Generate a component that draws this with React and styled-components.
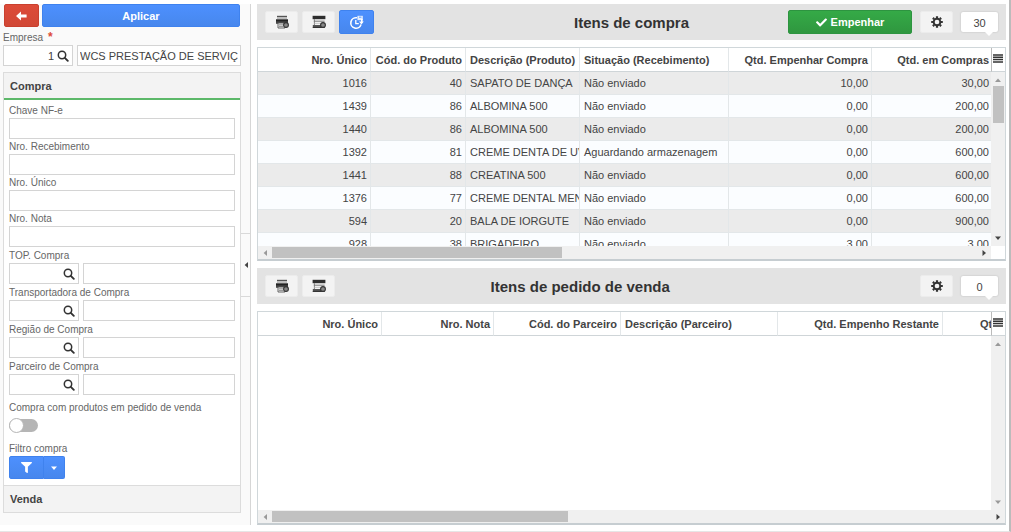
import { useState } from "react";
import styled, { createGlobalStyle, css } from "styled-components";
import { FaCheck, FaFilter } from "react-icons/fa";

const purchaseColumns = [
  { name: "Nro. Único", width: 113, align: "right" },
  { name: "Cód. do Produto", width: 95, align: "right" },
  { name: "Descrição (Produto)", width: 114, align: "left" },
  { name: "Situação (Recebimento)", width: 149, align: "left" },
  { name: "Qtd. Empenhar Compra", width: 143, align: "right" },
  { name: "Qtd. em Compras", width: 119, align: "right" },
];

const purchaseRows = [
  ["1016", "40", "SAPATO DE DANÇA", "Não enviado", "10,00", "30,00"],
  ["1439", "86", "ALBOMINA 500", "Não enviado", "0,00", "200,00"],
  ["1440", "86", "ALBOMINA 500", "Não enviado", "0,00", "200,00"],
  ["1392", "81", "CREME DENTA DE UV", "Aguardando armazenagem", "0,00", "600,00"],
  ["1441", "88", "CREATINA 500", "Não enviado", "0,00", "600,00"],
  ["1376", "77", "CREME DENTAL MEN", "Não enviado", "0,00", "600,00"],
  ["594", "20", "BALA DE IORGUTE", "Não enviado", "0,00", "900,00"],
  ["928", "38", "BRIGADEIRO", "Não enviado", "3,00", "3,00"],
];

const saleColumns = [
  { name: "Nro. Único", width: 124, align: "right" },
  { name: "Nro. Nota", width: 112, align: "right" },
  { name: "Cód. do Parceiro", width: 127, align: "right" },
  { name: "Descrição (Parceiro)", width: 157, align: "left" },
  { name: "Qtd. Empenho Restante", width: 165, align: "right" },
  { name: "Qtd.", width: 61, align: "right" },
];

const textFields = ["Chave NF-e", "Nro. Recebimento", "Nro. Único", "Nro. Nota"];

const lookupFields = [
  "TOP. Compra",
  "Transportadora de Compra",
  "Região de Compra",
  "Parceiro de Compra",
];

const ArrowLeftIcon = () => (
  <svg width="11" height="10" viewBox="0 0 11 10" aria-hidden="true">
    <path d="M0 5 5 0.4V3.4H10.6V6.6H5V9.6Z" fill="#fff" />
  </svg>
);

const SearchIcon = () => (
  <svg width="12" height="12" viewBox="0 0 12 12" fill="none" aria-hidden="true">
    <circle cx="5" cy="5" r="3.7" stroke="#333" strokeWidth="1.5" />
    <path d="m7.8 7.8 3 3" stroke="#333" strokeWidth="1.9" strokeLinecap="round" />
  </svg>
);

const PrinterIcon = () => (
  <svg width="14" height="14" viewBox="0 0 14 14" aria-hidden="true">
    <path d="M2 1h10v3H2z" fill="#bdbdbd" />
    <path d="M2 0.8h10v1.2H2z" fill="#555" />
    <path d="M1 4.2h12v4.6H1z" fill="#444" />
    <path d="M1 5.6h12" stroke="#222" strokeWidth="1.4" />
    <path d="M3 8h7v5H3z" fill="#eee" stroke="#555" strokeWidth="0.9" />
    <path d="M4 9.8h4M4 11.4h4" stroke="#777" strokeWidth="0.8" />
    <circle cx="11" cy="10" r="2.4" fill="#888" stroke="#333" strokeWidth="1.1" />
  </svg>
);

const GridCheckIcon = () => (
  <svg width="14" height="14" viewBox="0 0 14 14" aria-hidden="true">
    <path d="M0.6 0.8h12.8v3.4H0.6z" fill="#2e2e2e" />
    <path d="M1.8 6.2h10.8" stroke="#777" strokeWidth="1" />
    <path d="M2.4 4.2v6" stroke="#777" strokeWidth="0.9" />
    <path d="M2.6 8.4h6" stroke="#c4c4c4" strokeWidth="0.9" />
    <path d="M0.8 10h8.2v3H0.8z" fill="#555" />
    <path d="M0.8 12.4h12" stroke="#333" strokeWidth="1.1" />
    <circle cx="11" cy="10" r="2.4" fill="#888" stroke="#333" strokeWidth="1.1" />
  </svg>
);

const ClockRefreshIcon = () => (
  <svg width="15" height="15" viewBox="0 0 15 15" fill="none" aria-hidden="true">
    <path d="M12 9.4a5.2 5.2 0 1 1-4-6.6" stroke="#fff" strokeWidth="1.6" />
    <path d="M6.8 5v3.6h3" stroke="#fff" strokeWidth="1.3" />
    <path d="M8.4 0.8h5.4v4.4H8.4z" fill="#fff" fillOpacity="0.85" />
    <path d="M10 2.2h2.4" stroke="#4d90fe" strokeWidth="0.9" />
    <path d="M12.8 4v3" stroke="#fff" strokeWidth="1.6" />
    <path d="M10 6.4h4.8l-2.4 3Z" fill="#fff" />
  </svg>
);

const GearIcon = () => (
  <svg width="12" height="12" viewBox="0 0 12 12" fill="none" aria-hidden="true">
    <circle cx="6" cy="6" r="3.3" stroke="#333" strokeWidth="1.9" />
    <path
      d="M6 0.2v2M6 9.8v2M0.2 6h2M9.8 6h2M1.9 1.9l1.3 1.3M8.8 8.8l1.3 1.3M1.9 10.1l1.3-1.3M8.8 3.2l1.3-1.3"
      stroke="#333"
      strokeWidth="2.2"
    />
  </svg>
);

const MenuIcon = () => (
  <svg width="10" height="9" viewBox="0 0 10 9" aria-hidden="true">
    <path d="M0 1h10M0 3.3h10M0 5.6h10M0 7.9h10" stroke="#333" strokeWidth="1.5" />
  </svg>
);

const arrows = {
  up: "M0 5 3 1.6 6 5Z",
  down: "M0 1.5 3 5 6 1.5Z",
  left: "M5 0 1.6 3 5 6Z",
  right: "M1.5 0 5 3 1.5 6Z",
};

const Arrow = ({ direction, color = "#444" }) => (
  <svg width="6" height="6" viewBox="0 0 6 6" aria-hidden="true">
    <path d={arrows[direction]} fill={color} />
  </svg>
);

const LookupField = ({ id, label, value, required, light }) => (
  <Field $lookup={!light}>
    <Label htmlFor={id}>
      {label}
      {required && <Required>*</Required>}
    </Label>
    <LookupRow>
      <LookupBox>
        <LookupInput id={id} defaultValue={value?.code} />
        <SearchButton type="button" aria-label={`Pesquisar ${label}`}>
          <SearchIcon />
        </SearchButton>
      </LookupBox>
      <TextInput aria-label={`Descrição ${label}`} defaultValue={value?.name} />
    </LookupRow>
  </Field>
);

const Sidebar = () => {
  const [onlyOrders, setOnlyOrders] = useState(false);

  return (
    <SidebarContainer>
      <SidebarContent>
        <Actions>
          <BackButton type="button" aria-label="Voltar">
            <ArrowLeftIcon />
          </BackButton>
          <ApplyButton type="button">Aplicar</ApplyButton>
        </Actions>
        <Company>
          <LookupField
            id="empresa"
            label="Empresa"
            value={{ code: "1", name: "WCS PRESTAÇÃO DE SERVIÇOS" }}
            required
            light
          />
        </Company>
        <Accordion>
          <AccordionHeader type="button" aria-expanded="true" $open>
            Compra
          </AccordionHeader>
          <AccordionBody>
            {textFields.map((label, index) => (
              <Field key={label}>
                <Label htmlFor={`texto-${index}`}>{label}</Label>
                <TextInput id={`texto-${index}`} />
              </Field>
            ))}
            {lookupFields.map((label, index) => (
              <LookupField key={label} id={`busca-${index}`} label={label} />
            ))}
            <SwitchField>
              <Label htmlFor="produtos">Compra com produtos em pedido de venda</Label>
              <Switch
                id="produtos"
                type="checkbox"
                checked={onlyOrders}
                onChange={(e) => setOnlyOrders(e.target.checked)}
              />
            </SwitchField>
            <Label as="span">Filtro compra</Label>
            <FilterGroup>
              <FilterButton type="button" aria-label="Filtro compra">
                <FaFilter size={11} />
              </FilterButton>
              <FilterToggle type="button" aria-label="Opções do filtro">
                <Arrow direction="down" color="#fff" />
              </FilterToggle>
            </FilterGroup>
          </AccordionBody>
          <AccordionHeader type="button" aria-expanded="false">
            Venda
          </AccordionHeader>
        </Accordion>
      </SidebarContent>
      <Splitter>
        <CollapseButton type="button" aria-label="Recolher">
          <Arrow direction="left" />
        </CollapseButton>
      </Splitter>
    </SidebarContainer>
  );
};

const DataGrid = ({ columns, rows, label, thumb, fullBar }) => (
  <GridBox>
    <Viewport>
      <Table aria-label={label} $width={fullBar ? "746px" : "100%"}>
        <colgroup>
          {columns.map((column) => (
            <Col key={column.name} $width={column.width} />
          ))}
        </colgroup>
        <thead>
          <tr>
            {columns.map((column) => (
              <Th key={column.name} $align={column.align}>
                {column.name}
              </Th>
            ))}
          </tr>
        </thead>
        <tbody>
          {rows.map((row) => (
            <Tr key={row[0]}>
              {row.map((value, index) => (
                <Td key={columns[index].name} $align={columns[index].align}>
                  {value}
                </Td>
              ))}
            </Tr>
          ))}
        </tbody>
      </Table>
    </Viewport>
    <GridSide>
      <ColumnsButton type="button" aria-label="Colunas">
        <MenuIcon />
      </ColumnsButton>
      <VerticalBar>
        <Arrow direction="up" color="#999" />
        {!fullBar && <VerticalThumb />}
        <BarEnd $vertical>
          <Arrow direction="down" color={fullBar ? "#999" : "#444"} />
        </BarEnd>
      </VerticalBar>
    </GridSide>
    <HorizontalBar $full={fullBar}>
      <Arrow direction="left" color="#999" />
      <HorizontalThumb $width={thumb} />
      <BarEnd>
        <Arrow direction="right" />
      </BarEnd>
    </HorizontalBar>
  </GridBox>
);

const App = () => {
  return (
    <>
      <GlobalStyle />
      <Page>
        <Sidebar />
        <Main>
          <Toolbar $columns="1fr auto 1fr">
            <ToolGroup>
              <ToolButton type="button" aria-label="Imprimir">
                <PrinterIcon />
              </ToolButton>
              <ToolButton type="button" aria-label="Configurar grade">
                <GridCheckIcon />
              </ToolButton>
              <RefreshButton type="button" aria-label="Atualizar">
                <ClockRefreshIcon />
              </RefreshButton>
            </ToolGroup>
            <Title>Itens de compra</Title>
            <ToolGroup $end>
              <CommitButton type="button">
                <FaCheck size={11} />
                Empenhar
              </CommitButton>
              <ToolButton type="button" aria-label="Configurações">
                <GearIcon />
              </ToolButton>
              <Counter>30</Counter>
            </ToolGroup>
          </Toolbar>
          <DataGrid
            label="Itens de compra"
            columns={purchaseColumns}
            rows={purchaseRows}
            thumb="40%"
          />
          <Toolbar $columns="11fr auto 16fr">
            <ToolGroup>
              <ToolButton type="button" aria-label="Imprimir">
                <PrinterIcon />
              </ToolButton>
              <ToolButton type="button" aria-label="Configurar grade">
                <GridCheckIcon />
              </ToolButton>
            </ToolGroup>
            <Title>Itens de pedido de venda</Title>
            <ToolGroup $end>
              <ToolButton type="button" aria-label="Configurações">
                <GearIcon />
              </ToolButton>
              <Counter>0</Counter>
            </ToolGroup>
          </Toolbar>
          <DataGrid
            label="Itens de pedido de venda"
            columns={saleColumns}
            rows={[]}
            thumb="40%"
            fullBar
          />
        </Main>
      </Page>
    </>
  );
};

const GlobalStyle = createGlobalStyle`
  * {
    box-sizing: border-box;
  }
  body {
    margin: 0;
    background: #fff;
  }
  body, button, input {
    font-family: "Liberation Sans", Arial, sans-serif;
    font-size: 11px;
    color: #444;
  }
  button {
    padding: 0;
    border: 0;
    cursor: pointer;
  }
  svg {
    display: block;
    flex: none;
  }
`;

const center = css`
  display: flex;
  align-items: center;
  justify-content: center;
`;

const blueButton = css`
  ${center};
  color: #fff;
  background: linear-gradient(#4d90fe, #4787ed);
  border: 1px solid #3f82ee;
`;

const Page = styled.div`
  display: flex;
  height: 100vh;
  min-height: 530px;
  padding: 4px 3px 6px 0;
  border-right: 2px solid #bbb;
  border-bottom: 1px solid #e6e6e6;
`;

const SidebarContainer = styled.aside`
  display: flex;
  flex: none;
  width: 251px;
  background: #fafafa;
  border-right: 1px solid #d6d6d6;
`;

const SidebarContent = styled.div`
  flex: 1;
  min-width: 0;
  padding-left: 3px;
`;

const Actions = styled.div`
  display: flex;
  gap: 3px;
  padding: 0 1px;
`;

const BackButton = styled.button`
  ${center};
  width: 35px;
  height: 23px;
  border: 1px solid #c9402f;
  border-radius: 2px;
  background: linear-gradient(#dd4b39, #d14836);
`;

const ApplyButton = styled.button`
  ${blueButton};
  flex: 1;
  height: 23px;
  border-radius: 2px;
  font-weight: bold;
`;

const Company = styled.div`
  padding: 3px 0 6px;
`;

const Field = styled.div`
  padding-top: ${({ $lookup }) => ($lookup ? 1 : 0)}px;
`;

const Label = styled.label`
  display: block;
  font-size: 10px;
  line-height: 15px;
  color: #666;
`;

const Required = styled.span`
  margin-left: 5px;
  font-size: 12px;
  font-weight: bold;
  line-height: 10px;
  color: #dd4b39;
`;

const TextInput = styled.input`
  display: block;
  flex: 1;
  width: 100%;
  min-width: 0;
  height: 21px;
  padding: 0 2px;
  border: 1px solid #d4d4d4;
  background: #fff;
  outline: none;
`;

const LookupRow = styled.div`
  display: flex;
  gap: 4px;
`;

const LookupBox = styled.div`
  display: flex;
  align-items: center;
  width: 70px;
  height: 21px;
  padding-right: 3px;
  border: 1px solid #d4d4d4;
  background: #fff;
`;

const LookupInput = styled.input`
  flex: 1;
  min-width: 0;
  padding: 0 3px;
  border: 0;
  background: none;
  text-align: right;
  outline: none;
`;

const SearchButton = styled.button`
  background: none;
`;

const Accordion = styled.div`
  border: 1px solid #dcdcdc;
  border-top: 0;
  background: #fff;
`;

const AccordionHeader = styled.button`
  display: block;
  width: 100%;
  height: ${({ $open }) => ($open ? 28 : 27)}px;
  padding: 0 6px;
  border-top: 1px solid #dcdcdc;
  border-bottom: ${({ $open }) => ($open ? "2px solid #5cb869" : "0")};
  background: #f3f3f3;
  font-weight: bold;
  text-align: left;
`;

const AccordionBody = styled.div`
  padding: 3px 5px 6px;
`;

const SwitchField = styled.div`
  padding: 5px 0 9px;
`;

const Switch = styled.input`
  display: flex;
  align-items: center;
  justify-content: ${({ checked }) => (checked ? "flex-end" : "flex-start")};
  appearance: none;
  width: 29px;
  height: 13px;
  margin: 4px 0 0;
  border-radius: 7px;
  background: ${({ checked }) => (checked ? "#4d90fe" : "#b5b5b5")};
  cursor: pointer;
  &::before {
    content: "";
    width: 13px;
    height: 13px;
    border: 1px solid #b5b5b5;
    border-radius: 50%;
    background: #fff;
  }
`;

const FilterGroup = styled.div`
  display: flex;
`;

const FilterButton = styled.button`
  ${blueButton};
  width: 35px;
  height: 23px;
  border-radius: 2px 0 0 2px;
`;

const FilterToggle = styled.button`
  ${blueButton};
  width: 21px;
  height: 23px;
  border-left: 0;
  border-radius: 0 2px 2px 0;
`;

const Splitter = styled.div`
  display: flex;
  flex-direction: column;
  justify-content: center;
  width: 9px;
`;

const CollapseButton = styled.button`
  ${center};
  height: 64px;
  border-top: 1px solid #d9d9d9;
  border-bottom: 1px solid #d9d9d9;
  background: #fafafa;
`;

const Main = styled.main`
  display: flex;
  flex: 1;
  flex-direction: column;
  gap: 7px;
  min-width: 0;
  padding-left: 6px;
`;

const Toolbar = styled.div`
  display: grid;
  grid-template-columns: ${({ $columns }) => $columns};
  align-items: center;
  flex: none;
  height: 36px;
  padding: 0 8px;
  background: #e3e3e3;
`;

const ToolGroup = styled.div`
  display: flex;
  align-items: center;
  justify-content: ${({ $end }) => ($end ? "flex-end" : "flex-start")};
  gap: ${({ $end }) => ($end ? 8 : 4)}px;
  width: 0;
  min-width: 100%;
`;

const Title = styled.h2`
  margin: 0;
  font-size: 15px;
  font-weight: bold;
  color: #333;
  white-space: nowrap;
`;

const ToolButton = styled.button`
  ${center};
  flex: none;
  width: 33px;
  height: 22px;
  border: 1px solid #ececec;
  border-radius: 2px;
  background: #f3f3f3;
`;

const RefreshButton = styled.button`
  ${blueButton};
  width: 35px;
  height: 24px;
  border-radius: 2px;
`;

const CommitButton = styled.button`
  ${center};
  flex: none;
  gap: 4px;
  width: 124px;
  height: 24px;
  border: 1px solid #2d9440;
  border-radius: 2px;
  background: linear-gradient(#35aa47, #2f973f);
  color: #fff;
  font-weight: bold;
`;

const Counter = styled.div`
  ${center};
  position: relative;
  flex: none;
  width: 37px;
  height: 20px;
  padding-top: 2px;
  border-radius: 2px;
  background: #fff;
  box-shadow: 0 0 2px rgba(0, 0, 0, 0.2);
  &::after {
    content: "";
    position: absolute;
    right: 4px;
    bottom: -4px;
    border: 5px solid transparent;
    border-top-color: #fff;
    border-bottom: 0;
  }
`;

const GridBox = styled.div`
  display: grid;
  grid-template-columns: minmax(0, 1fr) 14px;
  grid-template-rows: minmax(0, 1fr) 13px;
  flex: 1;
  min-height: 0;
  border: 1px solid #d0d7da;
  border-bottom: 2px solid #c6cdd1;
`;

const Viewport = styled.div`
  overflow: hidden;
`;

const Table = styled.table`
  width: ${({ $width }) => $width};
  table-layout: fixed;
  border-collapse: separate;
  border-spacing: 0;
`;

const Col = styled.col`
  width: ${({ $width }) => $width}px;
`;

const cell = css`
  overflow: hidden;
  padding: 0 ${({ $align }) => ($align === "right" ? 3 : 0)}px 0 4px;
  border-right: 1px solid #e3e7e9;
  text-align: ${({ $align }) => $align};
  white-space: nowrap;
  &:last-child {
    padding-right: 2px;
    border-right: 0;
  }
`;

const Th = styled.th`
  ${cell};
  height: 24px;
  border-bottom: 1px solid #cfd5d8;
`;

const Td = styled.td`
  ${cell};
  height: 23px;
  border-bottom: 1px solid #e3e7e9;
`;

const Tr = styled.tr`
  background: #fbfdff;
  &:nth-child(odd) {
    background: #ebebeb;
  }
`;

const GridSide = styled.div`
  display: flex;
  flex-direction: column;
`;

const ColumnsButton = styled.button`
  ${center};
  flex: none;
  height: 24px;
  padding: 0 2px 2px 0;
  border-left: 1px solid #bbb;
  border-bottom: 1px solid #cfd5d8;
  background: #fff;
`;

const VerticalBar = styled.div`
  display: flex;
  flex: 1;
  flex-direction: column;
  align-items: center;
  gap: 3px;
  padding: 5px 0;
  background: #f0f0f0;
`;

const VerticalThumb = styled.div`
  width: 11px;
  height: 37px;
  background: #c1c1c1;
`;

const HorizontalBar = styled.div`
  display: flex;
  grid-column: ${({ $full }) => ($full ? "1 / 3" : "1")};
  align-items: center;
  gap: 4px;
  padding: 0 4px;
  background: #f0f0f0;
`;

const HorizontalThumb = styled.div`
  width: ${({ $width }) => $width};
  height: 11px;
  background: #c1c1c1;
`;

const BarEnd = styled.div`
  ${({ $vertical }) => ($vertical ? "margin-top: auto" : "margin-left: auto")};
`;

export default App;
